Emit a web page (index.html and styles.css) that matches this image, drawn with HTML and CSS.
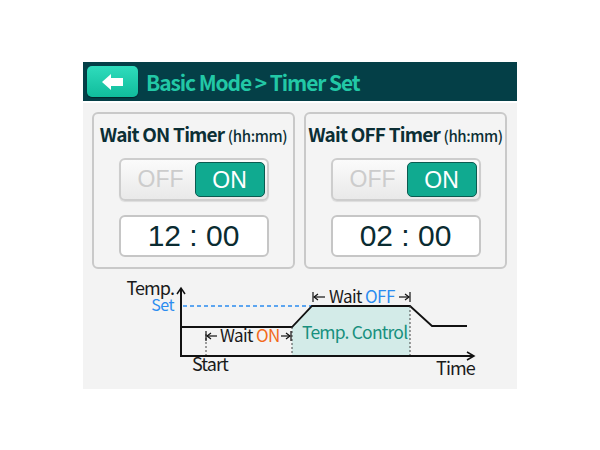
FILE: index.html
```html
<!DOCTYPE html>
<html lang="en">
<head>
  <meta charset="UTF-8">
  <title>Basic Mode - Timer Set</title>
  <link rel="stylesheet" href="styles.css">
</head>
<body>
  <div class="screen">
    <header class="top-bar">
      <button class="back-btn" aria-label="Back">
        <svg width="22" height="16" viewBox="0 0 22 16">
          <polygon points="0,8 9,0 9,4 21,4 21,12 9,12 9,16" fill="#ffffff"/>
        </svg>
      </button>
      <h1>Basic Mode &gt; Timer Set</h1>
    </header>

    <div class="content">
      <div class="panels">
        <div class="timer-card">
          <h2>Wait ON Timer <span class="unit">(hh:mm)</span></h2>
          <div class="toggle">
            <span class="seg">OFF</span>
            <span class="seg active">ON</span>
          </div>
          <div class="time-box">12 : 00</div>
        </div>
        <div class="timer-card">
          <h2>Wait OFF Timer <span class="unit">(hh:mm)</span></h2>
          <div class="toggle">
            <span class="seg">OFF</span>
            <span class="seg active">ON</span>
          </div>
          <div class="time-box">02 : 00</div>
        </div>
      </div>

      <!-- timing diagram, drawn in page coordinates -->
      <svg class="chart" width="434" height="117" viewBox="83 270 434 117">
        <polygon points="292,326 312,305 410,305 410,355 292,355" fill="#d3ebe8"/>
        <line x1="183" y1="305" x2="312" y2="305" stroke="#2b8cf0" stroke-width="1.5" stroke-dasharray="4,3"/>
        <polyline points="181,326 292,326 312,305 410,305 432,325 467,325" fill="none" stroke="#111" stroke-width="1.8"/>
        <line x1="206" y1="333" x2="206" y2="355" stroke="#444" stroke-width="1" stroke-dasharray="2,2"/>
        <line x1="292" y1="326" x2="292" y2="355" stroke="#444" stroke-width="1" stroke-dasharray="2,2"/>
        <line x1="410" y1="305" x2="410" y2="355" stroke="#444" stroke-width="1" stroke-dasharray="2,2"/>
        <!-- axes -->
        <polyline points="181,288 181,355 473,355" fill="none" stroke="#111" stroke-width="2"/>
        <polyline points="177,293 181,287 185,293" fill="none" stroke="#111" stroke-width="1.5"/>
        <polyline points="467,351 474,355 467,359" fill="none" stroke="#111" stroke-width="1.5"/>
        <!-- wait arrows -->
        <g stroke="#111" stroke-width="1.2" fill="none">
          <line x1="206" y1="330" x2="206" y2="340"/>
          <line x1="207" y1="335" x2="217" y2="335"/>
          <polyline points="211,332 207,335 211,338"/>
          <line x1="281" y1="335" x2="290" y2="335"/>
          <polyline points="286,332 290,335 286,338"/>
          <line x1="291" y1="330" x2="291" y2="340"/>
          <line x1="313" y1="291" x2="313" y2="301"/>
          <line x1="314" y1="296" x2="325" y2="296"/>
          <polyline points="318,293 314,296 318,299"/>
          <line x1="399" y1="296" x2="409" y2="296"/>
          <polyline points="405,293 409,296 405,299"/>
          <line x1="410" y1="291" x2="410" y2="301"/>
        </g>
        <text x="174" y="294" class="lbl big" text-anchor="end">Temp.</text>
        <text x="174" y="310" class="lbl set" text-anchor="end">Set</text>
        <text x="220" y="341" class="lbl wait">Wait <tspan class="on">ON</tspan></text>
        <text x="329" y="302" class="lbl wait">Wait <tspan class="off">OFF</tspan></text>
        <text x="302" y="338" class="lbl ctrl">Temp. Control</text>
        <text x="192" y="370" class="lbl big">Start</text>
        <text x="436" y="374" class="lbl big">Time</text>
      </svg>
    </div>
  </div>
</body>
</html>
```

FILE: styles.css
```css
body {
  margin: 0;
  background: #ffffff;
  font-family: "Noto Sans CJK KR", "Noto Sans", sans-serif;
}

.screen {
  width: 434px;
  margin: 62px 0 0 83px;
}

.top-bar {
  height: 39px;
  background-color: #043f47;
  display: flex;
  align-items: center;
  gap: 8px;
  padding-left: 4px;
  box-sizing: border-box;
}

.back-btn {
  width: 51px;
  height: 31px;
  border: none;
  border-radius: 5px;
  background: linear-gradient(#2fdcbc, #10bc9c);
  display: flex;
  align-items: center;
  justify-content: center;
  padding: 0;
  box-shadow: 0 1px 1px rgba(0, 0, 0, 0.4);
}

.top-bar h1 {
  margin: 0;
  font-size: 21px;
  font-weight: 700;
  color: #22c8a6;
  letter-spacing: -1.1px;
}

.content {
  background-color: #f3f3f3;
  margin-top: 2px;
  padding: 9px 10px 0 9px;
  height: 286px;
  box-sizing: border-box;
}

.panels {
  display: flex;
  gap: 9px;
}

.timer-card {
  width: 203px;
  height: 157px;
  box-sizing: border-box;
  border: 2px solid #c9c9c9;
  border-radius: 6px;
  background-color: #f4f4f4;
  display: flex;
  flex-direction: column;
  align-items: center;
}

.timer-card h2 {
  margin: 7px 0 0;
  font-size: 19px;
  font-weight: 700;
  color: #0c2f35;
  letter-spacing: -0.8px;
  white-space: nowrap;
  line-height: 25px;
}

.timer-card .unit {
  font-size: 15px;
  font-weight: 500;
  letter-spacing: -0.4px;
}

.toggle {
  margin-top: 10px;
  width: 150px;
  height: 43px;
  box-sizing: border-box;
  border: 2px solid #cdcdcd;
  border-radius: 6px;
  background: linear-gradient(#fbfbfb, #e9e9e9);
  display: flex;
  align-items: center;
  padding: 0 2px 0 6px;
  box-shadow: 0 1px 1px rgba(0, 0, 0, 0.1);
}

.seg {
  font-family: "Liberation Sans", Arial, sans-serif;
  font-size: 23px;
  color: #cccccc;
  flex: 1;
  text-align: center;
}

.seg.active {
  flex: 0 0 70px;
  height: 35px;
  line-height: 35px;
  box-sizing: border-box;
  border: 1.5px solid #0b5a50;
  border-radius: 5px;
  background-color: #10aa90;
  color: #ffffff;
}

.time-box {
  margin-top: 14px;
  width: 150px;
  height: 42px;
  box-sizing: border-box;
  border: 2px solid #c6c6c6;
  border-radius: 6px;
  background-color: #ffffff;
  font-family: "Liberation Sans", Arial, sans-serif;
  font-size: 30px;
  color: #0a2b31;
  text-align: center;
  line-height: 38px;
}

.chart {
  display: block;
  margin: 2px 0 0 -9px;
}

.lbl {
  font-family: "Noto Sans CJK KR", "Noto Sans", sans-serif;
  font-size: 15px;
  fill: #1a1a1a;
}

.lbl.big { font-size: 18px; letter-spacing: -0.9px; }
.lbl.wait { font-size: 17px; letter-spacing: -0.6px; }
.lbl.set { fill: #2b8cf0; font-size: 16px; letter-spacing: -0.5px; }
.lbl .on { fill: #f26a1b; }
.lbl .off { fill: #2b8cf0; }
.lbl.ctrl { fill: #17907e; font-size: 17.5px; letter-spacing: -0.8px; }
```
